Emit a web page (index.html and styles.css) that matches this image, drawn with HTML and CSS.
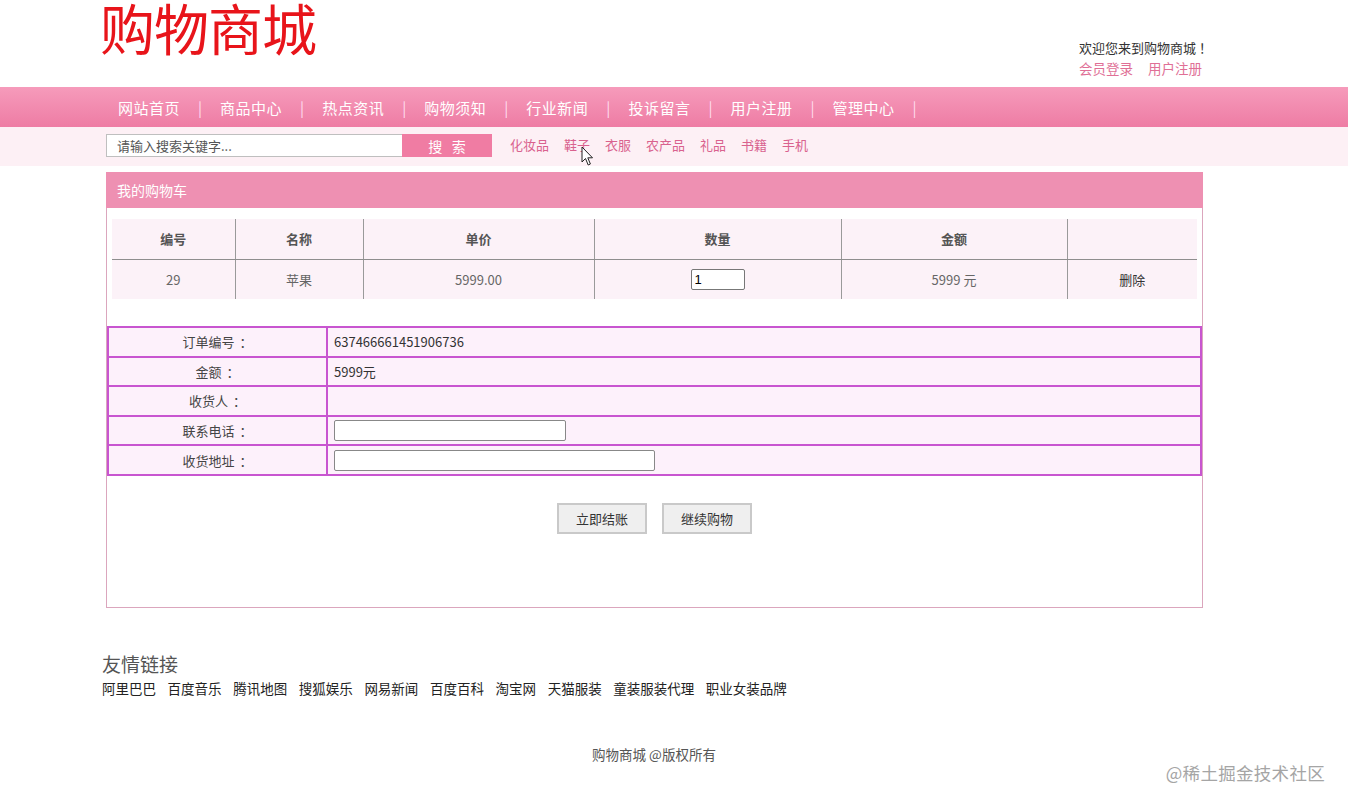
FILE: index.html
```html
<!DOCTYPE html>
<html lang="zh-CN">
<head>
<meta charset="utf-8">
<title>购物商城 - 我的购物车</title>
<link rel="stylesheet" href="styles.css">
</head>
<body>
<div class="top wrap">
  <div class="logo">购物商城</div>
  <div class="welcome">
    <div class="hello">欢迎您来到购物商城<span class="cpunct">！</span></div>
    <div class="acct"><a href="#">会员登录</a><a href="#">用户注册</a></div>
  </div>
</div>
<div class="navbar">
  <div class="wrap nav">
    <a href="#">网站首页</a><span class="sep">|</span>
    <a href="#">商品中心</a><span class="sep">|</span>
    <a href="#">热点资讯</a><span class="sep">|</span>
    <a href="#">购物须知</a><span class="sep">|</span>
    <a href="#">行业新闻</a><span class="sep">|</span>
    <a href="#">投诉留言</a><span class="sep">|</span>
    <a href="#">用户注册</a><span class="sep">|</span>
    <a href="#">管理中心</a><span class="sep">|</span>
  </div>
</div>
<div class="searchbar">
  <div class="wrap search">
    <input class="kw" type="text" value="请输入搜索关键字...">
    <button class="sbtn" type="button">搜&nbsp;&nbsp;&nbsp;索</button>
    <div class="cats">
      <a href="#">化妆品</a><a href="#">鞋子</a><a href="#">衣服</a><a href="#">农产品</a><a href="#">礼品</a><a href="#">书籍</a><a href="#">手机</a>
    </div>
  </div>
</div>
<div class="wrap">
  <div class="box">
    <div class="box-title">我的购物车</div>
    <table class="cart">
      <colgroup>
        <col style="width:123px"><col style="width:128px"><col style="width:231px"><col style="width:247px"><col style="width:226px"><col style="width:130px">
      </colgroup>
      <thead>
        <tr><th>编号</th><th>名称</th><th>单价</th><th>数量</th><th>金额</th><th></th></tr>
      </thead>
      <tbody>
        <tr><td>29</td><td>苹果</td><td>5999.00</td><td><input class="qty" type="text" value="1"></td><td>5999 元</td><td><a class="del" href="#">删除</a></td></tr>
      </tbody>
    </table>
    <table class="order">
      <tr><td class="lbl">订单编号<span class="cpunct">：</span></td><td class="val">637466661451906736</td></tr>
      <tr><td class="lbl">金额<span class="cpunct">：</span></td><td class="val">5999元</td></tr>
      <tr><td class="lbl">收货人<span class="cpunct">：</span></td><td class="val"></td></tr>
      <tr><td class="lbl">联系电话<span class="cpunct">：</span></td><td class="val"><input class="tel" type="text"></td></tr>
      <tr><td class="lbl">收货地址<span class="cpunct">：</span></td><td class="val"><input class="addr" type="text"></td></tr>
    </table>
    <div class="actions">
      <button type="button" class="btn">立即结账</button>
      <button type="button" class="btn">继续购物</button>
    </div>
  </div>
  <div class="links">
    <h3>友情链接</h3>
    <div class="linklist">
      <a href="#">阿里巴巴</a><a href="#">百度音乐</a><a href="#">腾讯地图</a><a href="#">搜狐娱乐</a><a href="#">网易新闻</a><a href="#">百度百科</a><a href="#">淘宝网</a><a href="#">天猫服装</a><a href="#">童装服装代理</a><a href="#">职业女装品牌</a>
    </div>
  </div>
  <div class="footer">购物商城 @版权所有</div>
</div>
<svg class="cursor" width="13" height="21" viewBox="0 0 13 21" aria-hidden="true">
  <path d="M1 1 L1 16 L4.5 12.5 L7.2 19 L9.4 18 L6.8 11.8 L11.5 11.8 Z" fill="#fff" stroke="#222" stroke-width="1" stroke-linejoin="round"/>
</svg>
<div class="watermark">@稀土掘金技术社区</div>
</body>
</html>
```
FILE: styles.css
```css
* { box-sizing: border-box; }
html, body { margin: 0; padding: 0; background: #fff; }
body {
  font-family: "Noto Sans CJK SC", "Liberation Sans", sans-serif;
  font-size: 13px;
  color: #333;
  position: relative;
  min-height: 805px;
}
a { text-decoration: none; color: inherit; }
.wrap { width: 1108px; margin-left: 100px; }
.cpunct { display: inline-block; width: 1em; box-sizing: content-box; }

.top { height: 87px; display: flex; justify-content: space-between; align-items: flex-start; }
.logo {
  font-size: 55px;
  line-height: 52px;
  color: #e8141a;
  letter-spacing: -1px;
}
.welcome { margin-top: 37px; margin-right: -4px; text-align: right; font-size: 13px; line-height: 21px; }
.hello { color: #333; }
.hello .cpunct { padding-left: 3px; }
.acct { padding-right: 10px; font-size: 13.5px; }
.acct a { color: #e06f96; margin-left: 15px; }

.navbar { height: 40px; background: linear-gradient(#f69bbb, #ee7ca4); }
.nav { display: flex; align-items: center; height: 40px; padding-left: 18px; font-size: 15px; color: #fff; }
.nav a { color: #fff; letter-spacing: 0.5px; }
.nav .sep { margin: 0 18px 0 18px; color: #fde; font-size: 15px; }

.searchbar { height: 39px; background: #fdf0f5; }
.search { display: flex; align-items: flex-start; height: 39px; padding: 7px 0 0 6px; }
.kw {
  width: 296px; height: 23px; margin: 0; padding: 0 10px;
  border: 1px solid #bfbfbf; border-right: none;
  font-family: inherit; font-size: 13px; color: #555; background: #fff; outline: none;
}
.sbtn {
  width: 90px; height: 23px; margin: 0; padding: 0; border: none;
  background: #f07ca3; color: #fff; font-family: inherit; font-size: 14px;
}
.cats { display: flex; gap: 15px; margin-left: 18px; font-size: 13px; line-height: 21px; }
.cats a { color: #d9628e; }

.box {
  margin: 6px 0 0 6px; width: 1097px; height: 436px;
  border: 1px solid #dba6bd; border-top: none;
}
.box-title {
  height: 36px; line-height: 36px; background: #ee90b2; color: #fff;
  font-size: 14px; padding-left: 11px; margin: 0 -1px;
}
.cart {
  width: 1085px; margin: 11px 0 0 5px; border-collapse: collapse; table-layout: fixed;
  background: #fcf2f8; color: #555; font-size: 13px;
}
.cart th, .cart td { height: 40px; text-align: center; padding: 0; border-left: 1px solid #9a9a9a; }
.cart th:first-child, .cart td:first-child { border-left: none; }
.cart th { font-weight: bold; color: #555; border-bottom: 1px solid #8e8e8e; }
.cart td { color: #666; }
.qty { width: 54px; height: 21px; border: 1px solid #777; border-radius: 2px; padding: 0 3px; font-size: 13px; font-family: "Liberation Sans", sans-serif; color: #000; }
.del { color: #333; }

.order {
  width: 1095px; margin-top: 27px; border-collapse: collapse; table-layout: fixed;
  background: #fdf1fb; font-size: 13px;
}
.order td { height: 29.6px; border: 2px solid #c855d0; padding: 0; }
.order .lbl { width: 219px; text-align: center; color: #444; }
.order .lbl .cpunct { padding-left: 5px; text-align: left; }
.order .val { padding-left: 6px; color: #333; }
.tel, .addr { height: 21px; border: 1px solid #888; border-radius: 2px; margin: 0; padding: 0 3px; display: block; background: #fff; }
.tel { width: 232px; }
.addr { width: 321px; }

.actions { display: flex; justify-content: center; gap: 15px; margin-top: 27px; }
.btn {
  width: 90px; height: 31px; background: #efefef; border: 2px solid #c9c9c9;
  font-family: inherit; font-size: 13px; color: #333; padding: 0;
}

.links { margin-top: 44px; padding-left: 2px; }
.links h3 { margin: 0 0 2px; font-weight: normal; font-size: 19px; line-height: 24px; color: #555; }
.linklist { display: flex; gap: 11.6px; font-size: 13.5px; line-height: 21px; color: #222; }
.linklist a { color: #222; }

.footer { text-align: center; margin-top: 46px; font-size: 13.5px; color: #555; line-height: 18px; }

.cursor { position: absolute; left: 581px; top: 146px; }

.watermark {
  position: absolute; right: 23px; top: 760px;
  font-size: 17.5px; color: #a5a5a5; letter-spacing: 0.3px;
}
```
